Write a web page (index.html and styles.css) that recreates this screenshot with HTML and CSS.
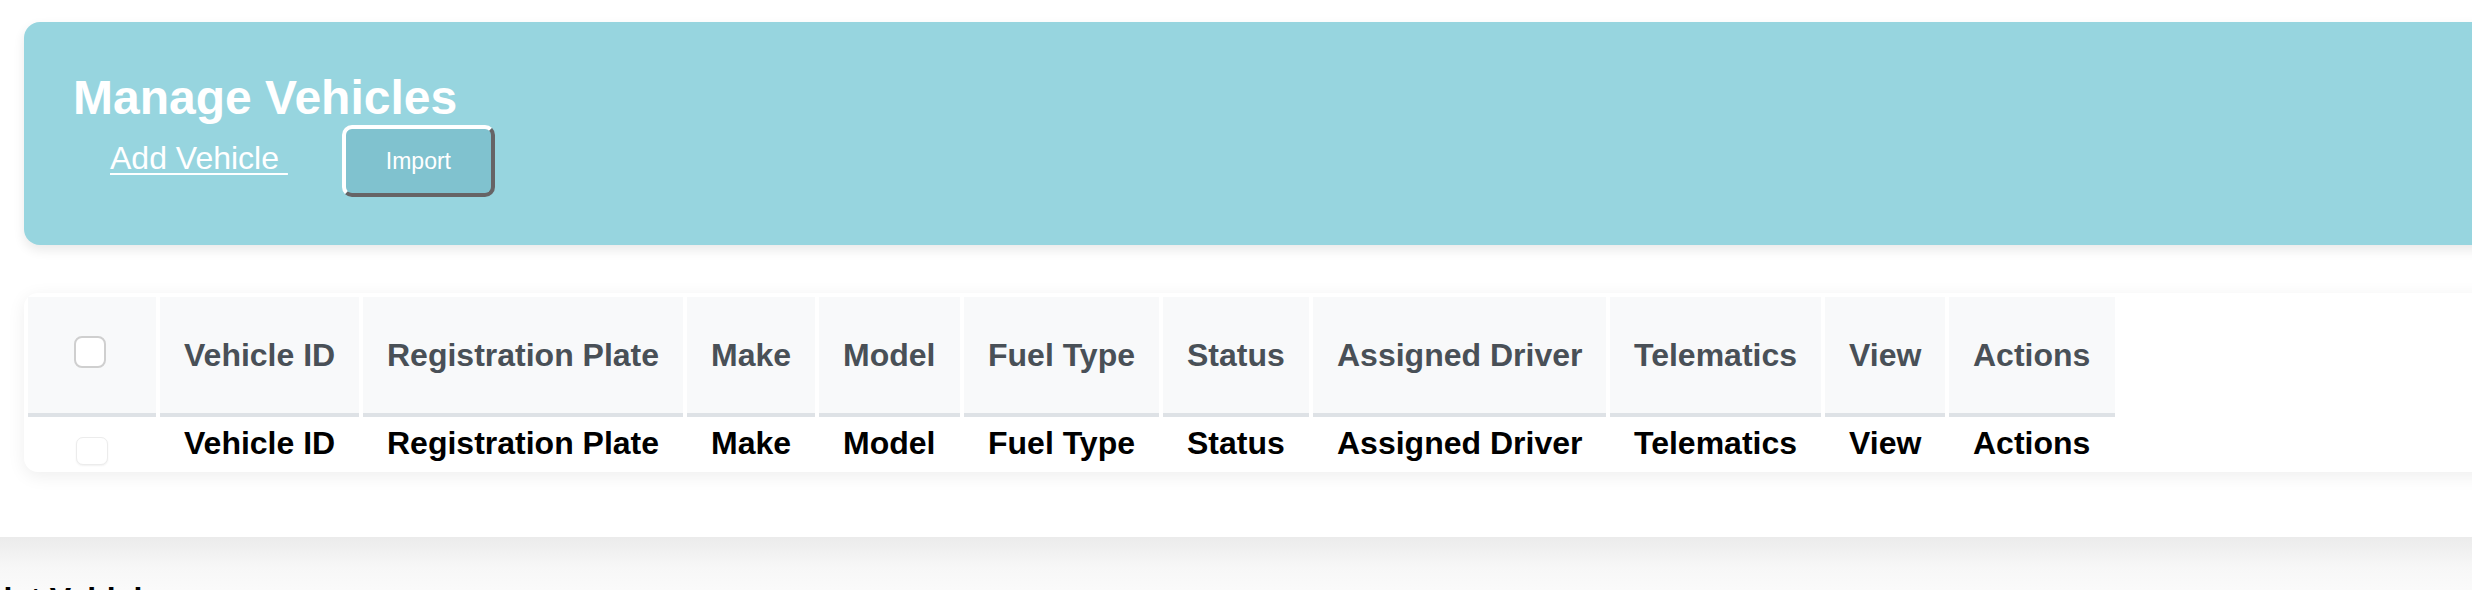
FILE: index.html
```html
<!DOCTYPE html>
<html lang="en">
<head>
<meta charset="utf-8">
<title>Manage Vehicles</title>
<link rel="stylesheet" href="styles.css">
</head>
<body>
<div class="page">
  <header class="hero">
    <h1 class="hero-title">Manage Vehicles</h1>
    <div class="hero-actions">
      <a class="hero-link" href="#">Add Vehicle </a>
      <button class="import-btn" type="button">Import</button>
    </div>
  </header>

  <section class="table-card">
    <table class="vehicles">
      <colgroup>
        <col class="c-check">
        <col class="c-id">
        <col class="c-plate">
        <col class="c-make">
        <col class="c-model">
        <col class="c-fuel">
        <col class="c-status">
        <col class="c-driver">
        <col class="c-tele">
        <col class="c-view">
        <col class="c-actions">
      </colgroup>
      <thead>
        <tr>
          <th class="check-cell"><input class="check check-head" type="checkbox"></th>
          <th>Vehicle ID</th>
          <th>Registration Plate</th>
          <th>Make</th>
          <th>Model</th>
          <th>Fuel Type</th>
          <th>Status</th>
          <th>Assigned Driver</th>
          <th>Telematics</th>
          <th>View</th>
          <th>Actions</th>
        </tr>
      </thead>
      <tbody>
        <tr>
          <td class="check-cell"><input class="check check-body" type="checkbox"></td>
          <td>Vehicle ID</td>
          <td>Registration Plate</td>
          <td>Make</td>
          <td>Model</td>
          <td>Fuel Type</td>
          <td>Status</td>
          <td>Assigned Driver</td>
          <td>Telematics</td>
          <td>View</td>
          <td>Actions</td>
        </tr>
      </tbody>
    </table>
  </section>

  <section class="list-card">
    <h2 class="list-title">List Vehicles</h2>
  </section>
</div>
</body>
</html>
```

FILE: styles.css
```css
html, body {
  margin: 0;
  padding: 0;
  background: #ffffff;
  overflow: hidden;
}

body {
  font-family: "Liberation Sans", Arial, Helvetica, sans-serif;
  color: #000;
}

.page {
  width: 2600px;
  padding: 22px 0 0 24px;
}

/* ---------- Header card ---------- */
.hero {
  background: #97d5df;
  border-radius: 16px;
  padding: 48px;
  box-shadow: 0 5px 12px rgba(0, 0, 0, 0.09);
}

.hero-title {
  margin: 0;
  font-size: 48px;
  font-weight: 700;
  line-height: normal;
  color: #ffffff;
  padding-left: 1px;
}

.hero-actions {
  display: flex;
  align-items: baseline;
}

.hero-link {
  margin-left: 38px;
  font-size: 32px;
  color: #ffffff;
  text-decoration: underline;
  text-decoration-thickness: 2px;
  text-underline-offset: 4px;
  white-space: pre;
}

.import-btn {
  margin-left: 54px;
  width: 153px;
  height: 72px;
  box-sizing: border-box;
  background: #80c2cf;
  color: #ffffff;
  font-family: "Liberation Sans", Arial, Helvetica, sans-serif;
  font-size: 23px;
  border-style: solid;
  border-width: 4px;
  border-color: #ffffff #666466 #666466 #ffffff;
  border-radius: 10px;
  padding: 0;
}

/* ---------- Table card ---------- */
.table-card {
  margin-top: 48px;
  background: #ffffff;
  border-radius: 14px;
  box-shadow: 0 4px 18px rgba(0, 0, 0, 0.07);
}

.vehicles {
  border-collapse: separate;
  border-spacing: 4px;
  table-layout: fixed;
  width: 2095px;
  font-size: 32px;
  font-weight: 700;
}

.c-check { width: 128px; }
.c-id { width: 199px; }
.c-plate { width: 320px; }
.c-make { width: 128px; }
.c-model { width: 141px; }
.c-fuel { width: 195px; }
.c-status { width: 146px; }
.c-driver { width: 293px; }
.c-tele { width: 211px; }
.c-view { width: 120px; }
.c-actions { width: 166px; }

.vehicles th {
  background: #f8f9fa;
  color: #495057;
  text-align: left;
  padding: 34px 24px;
  line-height: 48px;
  border-bottom: 4px solid #dee2e6;
  white-space: nowrap;
}

.vehicles td {
  color: #000;
  padding: 0 24px 3px 24px;
  line-height: 44px;
  white-space: nowrap;
}

.vehicles .check-cell {
  padding-left: 46px;
  padding-right: 0;
}

.check {
  -webkit-appearance: none;
  appearance: none;
  margin: 0;
  display: inline-block;
  box-sizing: border-box;
  background: #ffffff;
}

.check-head {
  width: 32px;
  height: 32px;
  border: 2px solid #cfcfcf;
  border-radius: 8px;
  vertical-align: -2px;
}

.check-body {
  width: 32px;
  height: 28px;
  margin-left: 2px;
  border: 1px solid #ececec;
  border-radius: 7px;
  box-shadow: 0 1px 2px rgba(0, 0, 0, 0.06);
  vertical-align: -11px;
}

/* ---------- Next card (cut off at the frame edge) ---------- */
.list-card {
  margin-top: 65px;
  margin-left: -24px;
  height: 120px;
  background: linear-gradient(#ebebeb 0px, #f7f7f7 30px, #fbfbfb 60px, #fcfcfc 100%);
}

.list-title {
  margin: 0 0 0 -16px;
  padding-top: 44px;
  font-size: 32px;
  font-weight: 700;
  color: #000;
  line-height: normal;
}
```
